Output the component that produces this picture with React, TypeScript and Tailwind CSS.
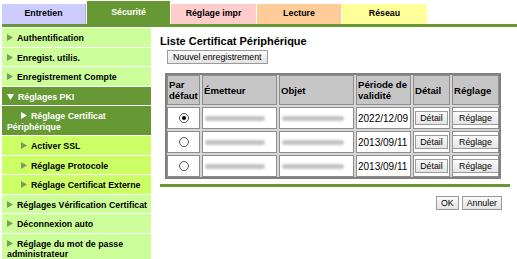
import React from "react";

const F = { fontFamily: '"Liberation Sans", Arial, sans-serif' };

function Arrow({ light }: { light?: boolean }) {
  return (
    <svg width="6" height="7" viewBox="0 0 6 7" className="inline-block mr-[4px] align-[0px]">
      <polygon points="0,0 6,3.5 0,7" fill={light ? "#ffffff" : "#7f9a5c"} />
    </svg>
  );
}

function ArrowDown() {
  return (
    <svg width="7" height="6" viewBox="0 0 7 6" className="inline-block mr-[4px] align-[0px]">
      <polygon points="0,0 7,0 3.5,6" fill="#ffffff" />
    </svg>
  );
}

type Item = { label: string; kind: "light" | "dark" | "sub" | "subdark" | "open" };

const items: Item[] = [
  { label: "Authentification", kind: "light" },
  { label: "Enregist. utilis.", kind: "light" },
  { label: "Enregistrement Compte", kind: "light" },
  { label: "Réglages PKI", kind: "open" },
  { label: "Réglage Certificat Périphérique", kind: "subdark" },
  { label: "Activer SSL", kind: "sub" },
  { label: "Réglage Protocole", kind: "sub" },
  { label: "Réglage Certificat Externe", kind: "sub" },
  { label: "Réglages Vérification Certificat", kind: "light" },
  { label: "Déconnexion auto", kind: "light" },
  { label: "Réglage du mot de passe administrateur", kind: "light" },
];

function SideItem({ it }: { it: Item }) {
  const dark = it.kind === "open" || it.kind === "subdark";
  const bg =
    it.kind === "light" ? "bg-[#ccff99] text-black" : it.kind === "sub" ? "bg-[#ccff66] text-black" : "bg-[#669933] text-white";
  const indent = it.kind === "sub" || it.kind === "subdark" ? "indent-[14px]" : "";
  return (
    <div className={`${bg} ${indent} border-b border-white pl-[5px] pr-[2px] pt-[5px] pb-[3px] leading-[10.5px] text-[8.8px] font-bold`}>
      {it.kind === "open" ? <ArrowDown /> : <Arrow light={dark} />}
      {it.label}
    </div>
  );
}

function Btn({ children, className = "" }: { children: React.ReactNode; className?: string }) {
  return (
    <button
      className={`border border-[#9a9a9a] bg-gradient-to-b from-[#fafafa] to-[#e4e4e4] text-[8.8px] leading-[10px] text-black px-[4px] h-[14px] ${className}`}
      style={F}
    >
      {children}
    </button>
  );
}

function Blur({ w }: { w: number }) {
  return <div className="h-[5px] bg-[#c4c4c4] blur-[1.2px] rounded-sm" style={{ width: w }} />;
}

function Radio({ checked }: { checked?: boolean }) {
  return (
    <div className="w-[10px] h-[10px] rounded-full border border-[#555] bg-white flex items-center justify-center">
      {checked && <div className="w-[4px] h-[4px] rounded-full bg-black" />}
    </div>
  );
}

const rows = [
  { checked: true, date: "2022/12/09" },
  { checked: false, date: "2013/09/11" },
  { checked: false, date: "2013/09/11" },
];

export default function App() {
  const cell = "border border-[#8e8e8e]";
  const head = `${cell} bg-[#c6c6c6] text-[9.6px] font-bold leading-[11px] pl-[1px] h-[30px] flex items-center`;
  const data = `${cell} bg-white h-[22px] flex items-center`;
  return (
    <div className="w-[517px] h-[259px] bg-white overflow-hidden text-black" style={F}>
      {/* Tabs */}
      <div className="flex items-end h-[24px] pl-[2px] gap-[1px]">
        <div className="w-[84px] h-[20px] bg-[#ccccff] border-r border-[#b0b0c0] flex items-center justify-center text-[8.8px] font-bold">Entretien</div>
        <div className="w-[83px] h-[23px] bg-[#669933] flex items-center justify-center text-[8.8px] font-bold text-white">Sécurité</div>
        <div className="w-[85px] h-[20px] bg-[#ffcccc] flex items-center justify-center text-[8.8px] font-bold">Réglage impr</div>
        <div className="w-[84px] h-[20px] bg-[#ffcc99] flex items-center justify-center text-[8.8px] font-bold">Lecture</div>
        <div className="w-[85px] h-[20px] bg-[#ffff99] flex items-center justify-center text-[8.8px] font-bold">Réseau</div>
      </div>
      <div className="ml-[2px] h-[3px] bg-[#669933]" />
      <div className="flex mt-[1px] pl-[2px]">
        {/* Sidebar */}
        <div className="w-[149px] shrink-0 flex flex-col">
          {items.map((it) => (
            <SideItem key={it.label} it={it} />
          ))}
        </div>
        {/* Main */}
        <div className="flex-1 pl-[9px] pr-[7px]">
          <div className="text-[11px] font-bold leading-[13px] mt-[7px]">Liste Certificat Périphérique</div>
          <div className="flex pl-[7px] mt-[2px]">
            <Btn className="px-[5px]">Nouvel enregistrement</Btn>
          </div>
          {/* Table */}
          <div className="ml-[5px] mt-[9px] w-[336px] border-2 border-[#808080] bg-[#d6d6d6]">
            <div className="grid gap-[2px] grid-cols-[33px_75px_75px_55px_37px_47px]">
              <div className={head}>
                Par
                <br />
                défaut
              </div>
              <div className={head}>Émetteur</div>
              <div className={head}>Objet</div>
              <div className={head}>
                Période de
                <br />
                validité
              </div>
              <div className={head}>Détail</div>
              <div className={head}>Réglage</div>
              {rows.map((r, i) => (
                <React.Fragment key={i}>
                  <div className={`${data} justify-center`}>
                    <Radio checked={r.checked} />
                  </div>
                  <div className={`${data} pl-[2px]`}>
                    <Blur w={60} />
                  </div>
                  <div className={`${data} pl-[2px]`}>
                    <Blur w={62} />
                  </div>
                  <div className={`${data} pl-[1px] text-[10px]`}>{r.date}</div>
                  <div className={`${data} justify-center`}>
                    <Btn>Détail</Btn>
                  </div>
                  <div className={`${data} justify-center`}>
                    <Btn className="px-[6px]">Réglage</Btn>
                  </div>
                </React.Fragment>
              ))}
            </div>
          </div>
          <div className="mt-[5px] h-[3px] bg-[#669933] w-[350px]" />
          <div className="flex justify-end gap-[3px] mt-[9px] w-[342px]">
            <Btn>OK</Btn>
            <Btn>Annuler</Btn>
          </div>
        </div>
      </div>
    </div>
  );
}
